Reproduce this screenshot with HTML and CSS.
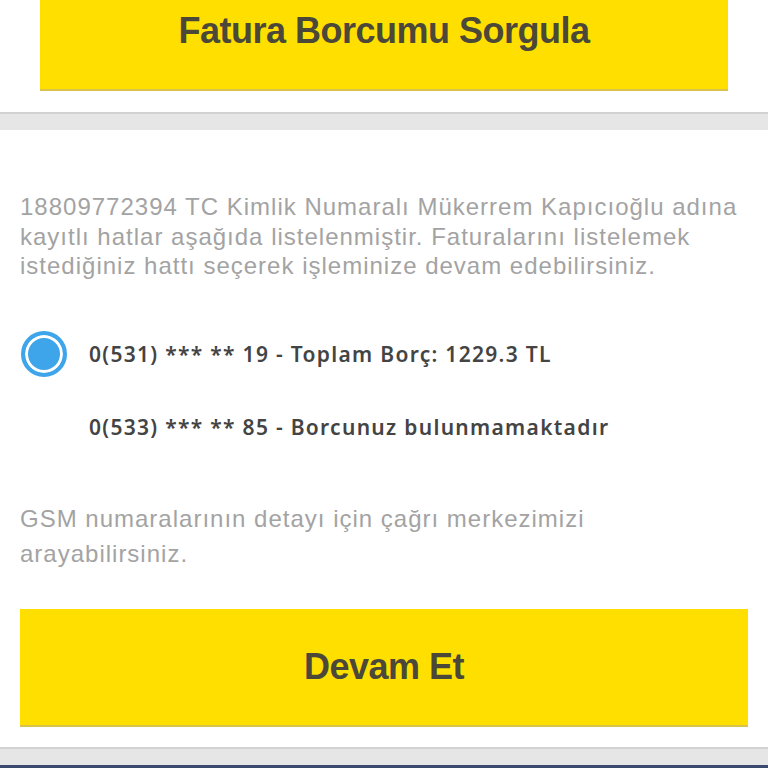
FILE: index.html
```html
<!DOCTYPE html>
<html lang="tr">
<head>
  <meta charset="UTF-8" />
  <meta name="viewport" content="width=device-width, initial-scale=1.0"/>
  <title>Fatura Borcumu Sorgula</title>
  <link rel="stylesheet" href="styles.css">
</head>
<body>
  <!-- Query header -->
  <div class="top-area">
    <button class="yellow-btn top-btn">Fatura Borcumu Sorgula</button>
  </div>

  <div class="divider"></div>

  <!-- Line list -->
  <div class="content">
    <p class="info-text">18809772394 TC Kimlik Numaralı Mükerrem Kapıcıoğlu adına<br>kayıtlı hatlar aşağıda listelenmiştir. Faturalarını listelemek<br>istediğiniz hattı seçerek işleminize devam edebilirsiniz.</p>

    <div class="line-list">
      <label class="line-item selected">
        <span class="radio"></span>
        <span class="line-text">0(531) *** ** 19 - Toplam Borç: 1229.3 TL</span>
      </label>
      <label class="line-item">
        <span class="radio"></span>
        <span class="line-text">0(533) *** ** 85 - Borcunuz bulunmamaktadır</span>
      </label>
    </div>

    <p class="note-text">GSM numaralarının detayı için çağrı merkezimizi<br>arayabilirsiniz.</p>

    <button class="yellow-btn next-btn">Devam Et</button>
  </div>

  <div class="divider bottom"></div>
</body>
</html>
```

FILE: styles.css
```css
* { margin: 0; padding: 0; box-sizing: border-box; }
body {
  font-family: 'Liberation Sans', Arial, sans-serif;
  background: #fff;
  width: 768px;
  height: 768px;
  overflow: hidden;
}


.yellow-btn {
  display: block;
  width: 100%;
  background: #ffdf00;
  border: none;
  border-bottom: 2px solid #d9c34a;
  color: #4b4839;
  font-family: 'Liberation Sans', Arial, sans-serif;
  font-weight: bold;
  font-size: 36px;
  letter-spacing: -0.5px;
  cursor: pointer;
}


.top-area {
  height: 112px;
  padding: 0 40px;
}


.top-btn {
  height: 91px;
  padding-bottom: 28px;
}


.divider {
  height: 18px;
  background: #e6e6e6;
  border-top: 2px solid #d2d2d2;
}


.divider.bottom {
  border-bottom: 3px solid #3a4a6e;
  height: 21px;
}


.content {
  padding: 62px 20px 20px;
}


.info-text {
  font-size: 24px;
  line-height: 29.5px;
  color: #a3a3a3;
  letter-spacing: 1px;
  white-space: nowrap;
}


.line-list {
  margin-top: 50px;
  display: flex;
  flex-direction: column;
  gap: 27px;
}


.line-item {
  display: flex;
  align-items: center;
  gap: 22px;
  height: 46px;
  padding-left: 1px;
}


.radio {
  width: 46px;
  height: 46px;
  border-radius: 50%;
  flex-shrink: 0;
}


.line-item.selected .radio {
  border: 4px solid #3ea5ea;
  background: #3ea5ea;
  box-shadow: inset 0 0 0 3px #fff;
}


.line-text {
  font-family: 'Noto Sans', sans-serif;
  font-weight: 600;
  font-size: 21px;
  letter-spacing: 1.3px;
  color: #444;
}


.note-text {
  margin-top: 51px;
  font-size: 24px;
  line-height: 35px;
  color: #a3a3a3;
  letter-spacing: 1px;
}


.next-btn {
  margin-top: 38px;
  height: 118px;
}
```
